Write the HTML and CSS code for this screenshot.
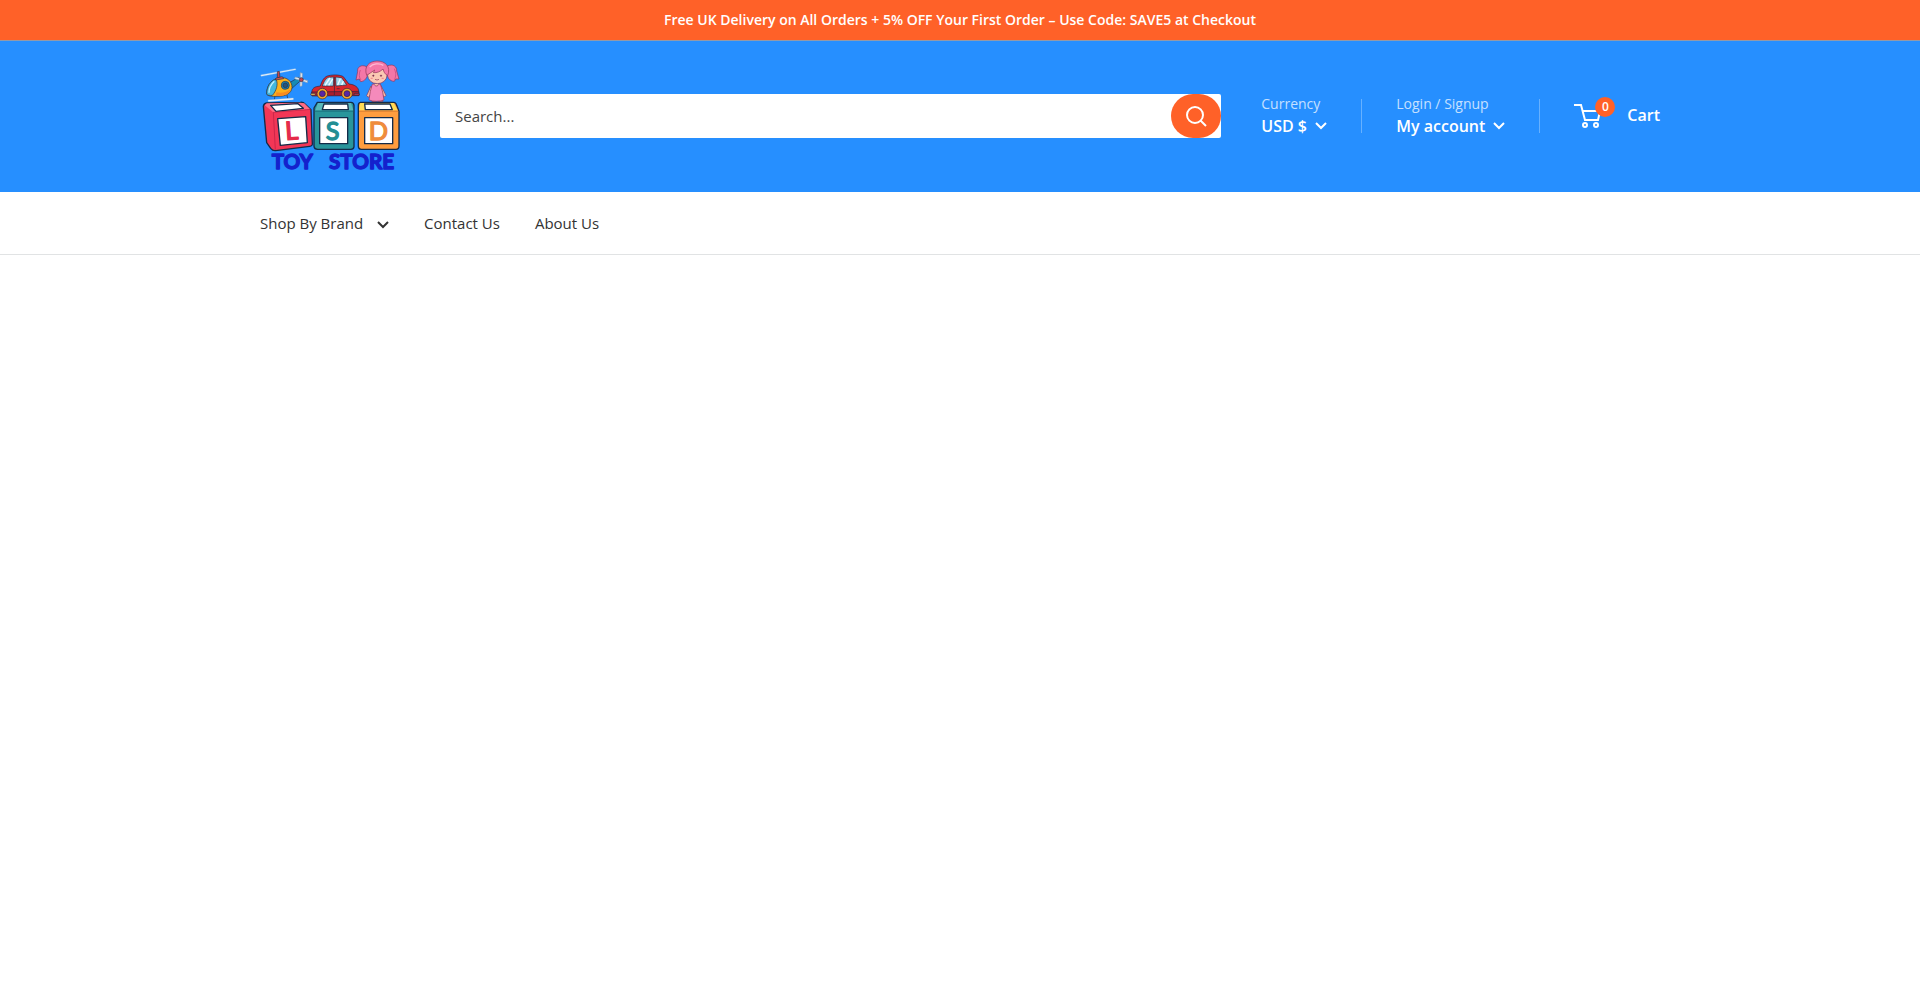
FILE: index.html
```html
<!DOCTYPE html>
<html lang="en">
<head>
    <meta charset="UTF-8">
    <meta name="viewport" content="width=device-width, initial-scale=1">
    <title>LSD Toy Store</title>
    <link rel="stylesheet" href="styles.css">
</head>
<body>
    <div class="announcement-bar">
        <p>Free UK Delivery on All Orders + 5% OFF Your First Order – Use Code: SAVE5 at Checkout</p>
    </div>

    <header class="header">
        <div class="container header-inner">
            <a href="#" class="logo" aria-label="LSD Toy Store">
                <svg viewBox="30 18 420 360" class="logo-image">
                    <!-- Helicopter -->
                    <g stroke="#26324a" stroke-width="2" stroke-linejoin="round">
                        <path d="M32 75L136 56L138 59L34 79Z" fill="#e9f3fb" stroke="#b9cfe2" stroke-width="1"/>
                        <path d="M110 103L146 82L154 90L120 120Z" fill="#168bb5"/>
                        <path d="M50 132C49 104 69 84 91 83C111 81 127 94 126 113C124 130 108 139 84 139C65 140 52 138 50 132Z" fill="#fbb01c"/>
                        <path d="M50 132C50 110 61 92 78 87C86 103 78 124 67 136C60 137 51 136 50 132Z" fill="#43b8df"/>
                        <path d="M57 128C57 116 63 103 73 94" fill="none" stroke="#c6f0ff" stroke-width="4"/>
                        <path d="M79 127C96 130 112 126 122 117C119 133 104 139 78 138Z" fill="#f78b20" stroke="none"/>
                        <circle cx="106" cy="106" r="12" fill="#197fae"/>
                        <circle cx="106" cy="106" r="7" fill="#2a5378"/>
                        <path d="M82 65L88 64L90 82L82 84Z" fill="#c9444b"/>
                        <path d="M78 84L97 80L101 86L76 90Z" fill="#d9534f"/>
                        <path d="M151 68L157 70L156 108L150 109Z" fill="#e7edf3" stroke="#8b9db0"/>
                        <path d="M136 81L173 92L172 98L134 86Z" fill="#e7edf3" stroke="#8b9db0"/>
                        <circle cx="154" cy="89" r="6" fill="#c9444b"/>
                        <path d="M75 138L73 149M111 135L113 145" fill="none"/>
                        <path d="M54 150L130 144L130 149L55 155Z" fill="#f1f7fc" stroke="#a7bed4" stroke-width="1"/>
                    </g>
                    <!-- Car -->
                    <g stroke="#32233b" stroke-width="2" stroke-linejoin="round">
                        <path d="M187 135C183 123 187 113 199 110L211 108C216 91 223 80 235 77C254 73 272 75 280 80L297 102C315 104 326 112 326 124L327 136Z" fill="#d8262d"/>
                        <path d="M185 126L326 124L327 137L186 138Z" fill="#a91e2c"/>
                        <path d="M217 108C222 94 228 84 236 82L251 81L250 108Z" fill="#9bd6ed"/>
                        <path d="M257 81L275 83L290 105L258 108Z" fill="#9bd6ed"/>
                        <path d="M225 106L240 84M236 106L248 87M263 105L271 86M275 105L280 94" stroke="#edfbff" stroke-width="4"/>
                        <path d="M254 80L253 135" fill="none"/>
                        <path d="M260 116h9" fill="none"/>
                        <circle cx="217" cy="131" r="16" fill="#f2a72e"/>
                        <circle cx="217" cy="131" r="9" fill="#5825a6"/>
                        <circle cx="291" cy="131" r="16" fill="#f2a72e"/>
                        <circle cx="291" cy="131" r="9" fill="#5825a6"/>
                        <rect x="182" y="130" width="14" height="6" rx="3" fill="#e4b75b"/>
                        <rect x="312" y="130" width="16" height="6" rx="3" fill="#b9374c"/>
                    </g>
                    <!-- Doll -->
                    <g stroke="#8f3458" stroke-width="2" stroke-linejoin="round">
                        <path d="M350 50C333 42 321 52 323 64L318 90L328 87L332 95C344 94 352 84 354 68Z" fill="#f477a7"/>
                        <path d="M412 48C429 40 441 50 440 63L447 87L437 87L433 94C419 94 410 82 412 66Z" fill="#f477a7"/>
                        <path d="M331 60C326 73 327 82 333 90M433 56C439 70 438 80 433 89" fill="none" stroke="#c34379"/>
                        <path d="M363 108L350 137L355 142L371 122ZM393 107L408 136L403 141L386 122Z" fill="#f7bea7"/>
                        <path d="M368 142h11v13h-13zM384 142h12l2 13h-13z" fill="#f7bea7"/>
                        <path d="M367 102H391L398 126L402 150C387 155 370 155 357 150L361 124Z" fill="#f58abb"/>
                        <path d="M372 102C374 110 384 110 387 102" fill="#f7bea7"/>
                        <ellipse cx="382" cy="76" rx="29" ry="25" fill="#fac9b3"/>
                        <path d="M350 76C341 49 357 34 381 33C407 33 423 50 413 77C405 73 401 65 399 57C391 65 381 69 370 68L374 60C365 66 357 72 350 76Z" fill="#f477a7"/>
                        <path d="M359 51C368 41 388 38 400 46" fill="none" stroke="#ffb8d2" stroke-width="4"/>
                        <circle cx="370" cy="77" r="2" fill="#452239"/>
                        <circle cx="393" cy="77" r="2" fill="#452239"/>
                        <path d="M375 88Q381 92 387 88" fill="none"/>
                        <path d="M362 85h6M395 85h6" stroke="#f08c91" stroke-width="4"/>
                    </g>
                    <!-- Blocks -->
                    <g stroke="#142b48" stroke-width="4" stroke-linejoin="round">
                        <path d="M40 169Q41 161 50 159L151 157Q160 156 165 162L183 179L187 280Q188 288 179 289L77 302Q68 303 62 295L50 278Z" fill="#f23656"/>
                        <path d="M44 166L70 187L181 178L163 160L151 158L50 160Z" fill="#ff6b82" stroke="none"/>
                        <path d="M62 166L144 161L160 175L78 184Z" fill="#fff"/>
                        <path d="M70 187L183 178M70 187L76 299" fill="none" stroke="#b91e43" stroke-width="2"/>
                        <path d="M83 206L167 200L172 278L91 286Z" fill="#fff"/>
                        <path d="M202 157H303Q311 157 312 166V290Q311 298 303 298H203Q193 298 192 289V174Z" fill="#28959b"/>
                        <path d="M204 159H303L310 181H196Z" fill="#58b7b9" stroke="none"/>
                        <path d="M222 162H293L295 179H217Z" fill="#fff"/>
                        <path d="M194 184H310" stroke="#176a78" stroke-width="2"/>
                        <path d="M209 203H293V281H209Z" fill="#fff"/>
                        <path d="M331 157H431Q438 157 440 166L447 184V288Q447 298 438 298H334Q325 298 325 289V166Q325 158 331 157Z" fill="#ff9d3e"/>
                        <path d="M331 159H431L443 181H327Z" fill="#ffdc55" stroke="none"/>
                        <path d="M344 162H420L427 179H346Z" fill="#fff"/>
                        <path d="M327 184H445" stroke="#cf742f" stroke-width="2"/>
                        <path d="M344 203H428V281H344Z" fill="#fff"/>
                    </g>
                    <g class="block-letters">
                        <text x="105" y="269" fill="#e52b4a" stroke="#e52b4a" transform="rotate(-4 125 240)">L</text>
                        <text x="227" y="269" fill="#238e94" stroke="#238e94">S</text>
                        <text x="356" y="269" fill="#ef8c3c" stroke="#ef8c3c">D</text>
                    </g>
                    <g class="store-name">
                        <text x="65" y="358">TOY</text>
                        <text x="237" y="358">STORE</text>
                    </g>
                </svg>
            </a>

            <form class="search" role="search">
                <input type="search" class="search-input" placeholder="Search..." aria-label="Search">
                <button type="submit" class="search-btn" aria-label="Search">
                    <svg width="21" height="21" viewBox="0 0 21 21" fill="none" stroke="currentColor" stroke-width="2">
                        <circle cx="9" cy="9" r="8"/>
                        <path d="M14.5 14.5L20 20"/>
                    </svg>
                </button>
            </form>

            <div class="header-item">
                <label for="currency" class="item-title">Currency</label>
                <div class="item-link">
                    <select id="currency" class="currency-select">
                        <option>USD $</option>
                    </select>
                    <svg class="arrow" viewBox="0 0 12 8"><path d="M1 1L6 6L11 1"/></svg>
                </div>
            </div>

            <div class="header-item with-line">
                <span class="item-title">Login / Signup</span>
                <a href="#" class="item-link">My account
                    <svg class="arrow" viewBox="0 0 12 8"><path d="M1 1L6 6L11 1"/></svg>
                </a>
            </div>

            <a href="#" class="cart with-line">
                <span class="cart-icon">
                    <svg width="27" height="24" viewBox="0 0 27 24" fill="none" stroke="currentColor" stroke-width="2">
                        <path d="M0 1H7L11 16H24L26 7H9"/>
                        <circle cx="11" cy="21" r="2"/>
                        <circle cx="22" cy="21" r="2"/>
                    </svg>
                    <span class="cart-count">0</span>
                </span>
                <span class="cart-text">Cart</span>
            </a>
        </div>
    </header>

    <nav class="nav-bar">
        <ul class="container nav-list">
            <li><a href="#">Shop By Brand <svg class="arrow" viewBox="0 0 12 8"><path d="M1 1L6 6L11 1"/></svg></a></li>
            <li><a href="#">Contact Us</a></li>
            <li><a href="#">About Us</a></li>
        </ul>
    </nav>
</body>
</html>
```
FILE: styles.css
```css
* {
    box-sizing: border-box;
}

body {
    margin: 0;
    background: #fff;
    color: #333;
    font-family: "Open Sans", "Noto Sans", sans-serif;
    font-size: 15px;
}

a {
    color: inherit;
    text-decoration: none;
}

.container {
    max-width: 1480px;
    margin: 0 auto;
    padding: 0 40px;
}

/* Announcement */
.announcement-bar {
    background: #ff6128;
    border-bottom: 1px solid #939aa8;
    color: #fff;
    font-size: 14px;
    font-weight: 600;
    line-height: 40px;
    text-align: center;
}

.announcement-bar p {
    margin: 0;
}

/* Header */
.header {
    background: #268fff;
    color: #fff;
    padding: 15px 0 16px;
}

.header-inner {
    display: flex;
    align-items: center;
}

.logo {
    flex: none;
    margin-right: 40px;
}

.logo-image {
    display: block;
    width: 140px;
    height: 120px;
}

.block-letters {
    font-family: Lato, sans-serif;
    font-size: 76px;
    font-weight: 400;
    stroke-width: 4px;
    stroke-linejoin: round;
}

.store-name {
    fill: #1421cd;
    stroke: #1421cd;
    stroke-width: 4px;
    stroke-linejoin: round;
    font-family: Lato, sans-serif;
    font-size: 62px;
    font-weight: 700;
}

.search {
    display: flex;
    flex: 1;
    height: 44px;
    margin-right: 40px;
    overflow: hidden;
    background: #fff;
    border-radius: 2px;
}

.search-input {
    flex: 1;
    min-width: 0;
    padding: 0 15px;
    border: none;
    outline: none;
    background: none;
    color: #333;
    font: inherit;
}

.search-input::placeholder {
    color: #444;
}

.search-btn {
    display: flex;
    align-items: center;
    justify-content: center;
    width: 50px;
    padding: 0;
    border: none;
    border-radius: 22px;
    background: #ff6128;
    color: #fff;
    cursor: pointer;
}

.header-item {
    display: flex;
    flex-direction: column;
    flex: none;
    padding-bottom: 2px;
}

.item-title {
    color: #c5e0ff;
    font-size: 14px;
    line-height: 22px;
}

.item-link {
    display: flex;
    align-items: center;
    gap: 8px;
    font-size: 16px;
    font-weight: 600;
    line-height: 22px;
}

.currency-select {
    appearance: none;
    padding: 0;
    border: none;
    background: none;
    color: inherit;
    font: inherit;
}

.arrow {
    width: 12px;
    height: 8px;
    fill: none;
    stroke: currentColor;
    stroke-width: 2;
}

.with-line {
    display: flex;
    position: relative;
    margin-left: 69px;
}

.with-line::before {
    content: "";
    position: absolute;
    top: 50%;
    left: -35px;
    height: 34px;
    margin-top: -17px;
    border-left: 1px solid #67b1ff;
}

.cart {
    align-items: center;
    flex: none;
    gap: 26px;
    font-size: 16px;
    font-weight: 600;
}

.cart-text {
    padding-bottom: 2px;
}

.cart-icon {
    position: relative;
}

.cart-icon svg {
    display: block;
}

.cart-count {
    position: absolute;
    top: -7px;
    right: -14px;
    width: 20px;
    height: 20px;
    border-radius: 50%;
    background: #ff6128;
    font-size: 12px;
    line-height: 20px;
    text-align: center;
}

/* Navigation */
.nav-bar {
    border-bottom: 1px solid #e1e3e4;
}

.nav-list {
    display: flex;
    gap: 35px;
    list-style: none;
    line-height: 62px;
}

.nav-list .arrow {
    margin-left: 10px;
}
```
